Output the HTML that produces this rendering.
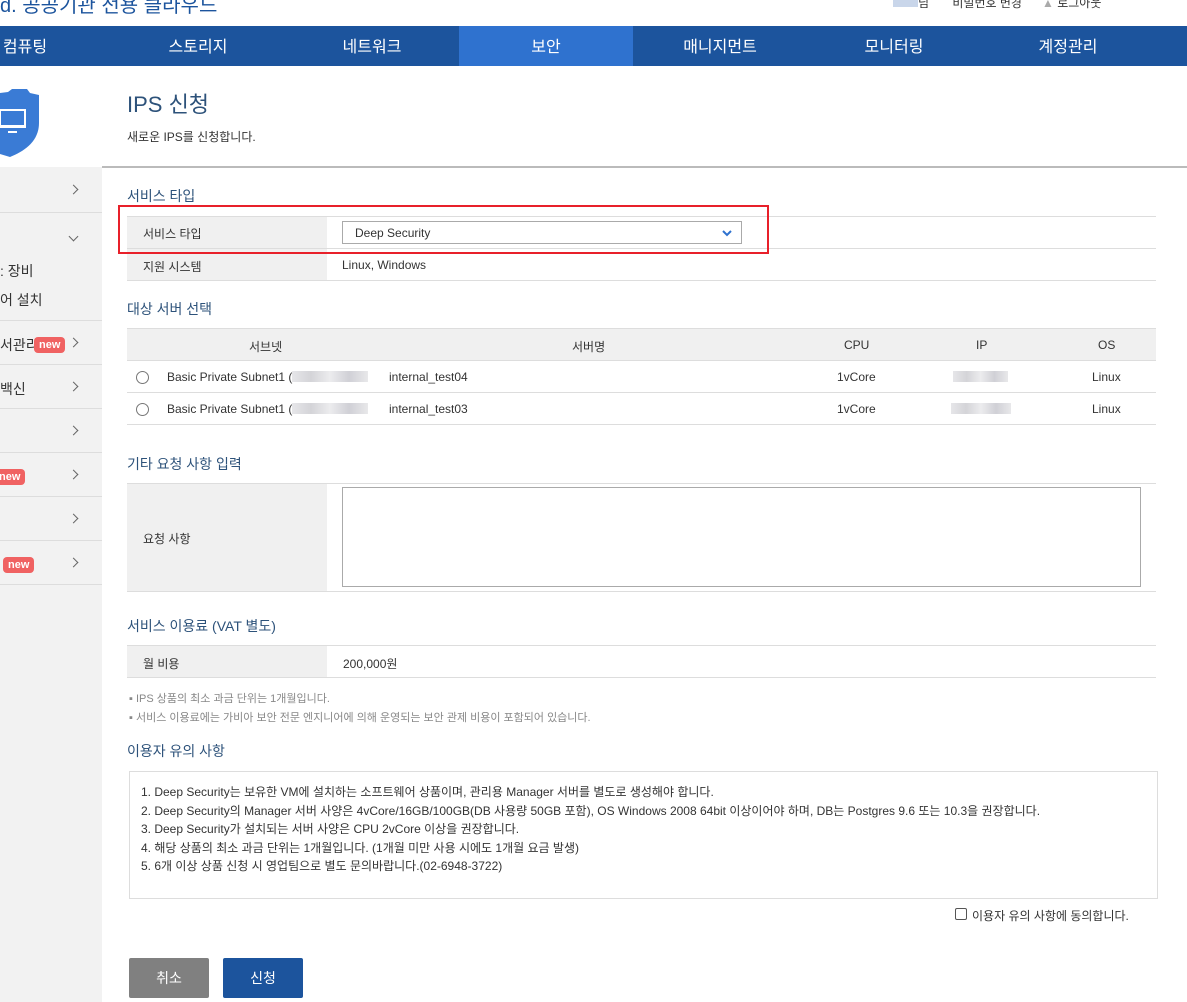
<!DOCTYPE html>
<html><head><meta charset="utf-8"><style>
*{margin:0;padding:0;box-sizing:border-box}
body{width:1187px;height:1002px;overflow:hidden;background:#fff;position:relative;font-family:"Liberation Sans","Noto Sans CJK KR",sans-serif;color:#333;font-size:12px}
.a{position:absolute;white-space:nowrap}
.nav{position:absolute;left:0;top:26px;width:1187px;height:40px;background:#1c549d}
.nav div{position:absolute;top:0;height:40px;line-height:44px;width:174px;text-align:center;color:#fff;font-size:16px}
.side{position:absolute;left:0;top:167px;width:102px;height:835px;background:#f2f2f2}
.srow{position:absolute;left:0;width:102px;border-bottom:1px solid #ddd}
.chev{position:absolute;left:70px;width:7px;height:7px;border-right:1.5px solid #666;border-top:1.5px solid #666;transform:rotate(45deg)}
.new{position:absolute;background:#f06262;color:#fff;font-weight:bold;font-size:11px;border-radius:4px;height:16px;line-height:16px;padding:0 5px}
.h{position:absolute;left:127px;font-size:14px;color:#2d527a}
.hl{position:absolute;left:127px;width:1029px;height:1px;background:#ddd}
.lab{position:absolute;left:127px;width:200px;background:#f0f0f0}
.t{position:absolute;font-size:12px;color:#333}
.radio{position:absolute;left:136px;width:13px;height:13px;border:1px solid #777;border-radius:50%;background:#fff}
.blur{position:absolute;height:11px;background:linear-gradient(90deg,#e6e6e9,#d4d4d8,#ececee,#d0d0d6,#e8e8ea)}
</style></head><body>
<div class="a" style="left:0;top:-11px;font-size:20px;color:#1c549d">d. 공공기관 전용 클라우드</div>
<div class="a" style="left:893px;top:-6px;font-size:12px;color:#333"><span style="display:inline-block;width:25px;height:8px;background:#c9d6ea"></span>님 &nbsp;&nbsp;&nbsp;&nbsp;&nbsp; 비밀번호 변경 &nbsp;&nbsp;&nbsp;&nbsp; <span style="color:#aaa">▲</span> 로그아웃</div>
<div class="nav">
<div style="left:-62px">컴퓨팅</div><div style="left:111px">스토리지</div><div style="left:285px">네트워크</div>
<div style="left:459px;background:#2f72cf">보안</div><div style="left:633px">매니지먼트</div><div style="left:807px">모니터링</div><div style="left:981px">계정관리</div>
</div>
<svg class="a" style="left:0;top:89px" width="42" height="70" viewBox="0 0 42 70"><path d="M0 4 L8 3 L12 0 L27 0 L30 4 L39 6 L39 34 C39 52 25 62 10 68 L0 65 Z" fill="#3a7bd5"/><rect x="0" y="20" width="26" height="19" fill="#fff"/><rect x="1" y="22" width="23" height="14" fill="#3a7bd5"/><rect x="8" y="42" width="9" height="2" fill="#fff"/></svg>
<div class="a" style="left:102px;top:166px;width:1085px;height:2px;background:#bbb"></div>
<div class="side"></div>
<div class="srow" style="top:167px;height:46px"><div class="chev" style="top:19px"></div></div>
<div class="srow" style="top:213px;height:108px"><div class="chev" style="top:20px;transform:rotate(135deg)"></div><div class="a" style="left:0;top:48px;font-size:14px">: 장비</div><div class="a" style="left:0;top:77px;font-size:14px">어 설치</div></div>
<div class="srow" style="top:321px;height:44px"><div class="a" style="left:0;top:14px;font-size:14px">서관리</div><div class="new" style="left:34px;top:16px">new</div><div class="chev" style="top:18px"></div></div>
<div class="srow" style="top:365px;height:44px"><div class="a" style="left:0;top:14px;font-size:14px">백신</div><div class="chev" style="top:18px"></div></div>
<div class="srow" style="top:409px;height:44px"><div class="chev" style="top:18px"></div></div>
<div class="srow" style="top:453px;height:44px"><div class="new" style="left:-6px;top:16px">new</div><div class="chev" style="top:18px"></div></div>
<div class="srow" style="top:497px;height:44px"><div class="chev" style="top:18px"></div></div>
<div class="srow" style="top:541px;height:44px"><div class="new" style="left:3px;top:16px">new</div><div class="chev" style="top:18px"></div></div>

<div class="a" style="left:127px;top:87px;font-size:22px;color:#2d527a">IPS 신청</div>
<div class="a" style="left:127px;top:128px;font-size:12px">새로운 IPS를 신청합니다.</div>

<div class="h" style="top:186px">서비스 타입</div>
<div class="hl" style="top:216px"></div>
<div class="lab" style="top:217px;height:63px"></div>
<div class="hl" style="top:248px"></div>
<div class="hl" style="top:280px"></div>
<div class="t" style="left:143px;top:225px">서비스 타입</div>
<div class="a" style="left:342px;top:221px;width:400px;height:23px;border:1px solid #aaa;background:#fff;font-size:12px;line-height:23px;padding-left:12px">Deep Security<svg style="position:absolute;right:9px;top:8px" width="10" height="7"><path d="M1 1 L5 5 L9 1" stroke="#2f72cf" stroke-width="2" fill="none"/></svg></div>
<div class="t" style="left:143px;top:258px">지원 시스템</div>
<div class="t" style="left:342px;top:258px">Linux, Windows</div>
<div class="a" style="left:118px;top:205px;width:651px;height:49px;border:2px solid #e8202a"></div>

<div class="h" style="top:299px">대상 서버 선택</div>
<div class="hl" style="top:328px"></div>
<div class="a" style="left:127px;top:329px;width:1029px;height:31px;background:#f0f0f0"></div>
<div class="hl" style="top:360px"></div><div class="hl" style="top:392px"></div><div class="hl" style="top:424px"></div>
<div class="t" style="left:249px;top:338px">서브넷</div>
<div class="t" style="left:572px;top:338px">서버명</div>
<div class="t" style="left:844px;top:338px">CPU</div>
<div class="t" style="left:976px;top:338px">IP</div>
<div class="t" style="left:1098px;top:338px">OS</div>
<div class="radio" style="top:371px"></div>
<div class="t" style="left:167px;top:370px">Basic Private Subnet1 (</div><div class="blur" style="left:292px;top:371px;width:76px"></div>
<div class="t" style="left:389px;top:370px">internal_test04</div><div class="t" style="left:837px;top:370px">1vCore</div><div class="blur" style="left:953px;top:371px;width:55px"></div><div class="t" style="left:1092px;top:370px">Linux</div>
<div class="radio" style="top:403px"></div>
<div class="t" style="left:167px;top:402px">Basic Private Subnet1 (</div><div class="blur" style="left:292px;top:403px;width:76px"></div>
<div class="t" style="left:389px;top:402px">internal_test03</div><div class="t" style="left:837px;top:402px">1vCore</div><div class="blur" style="left:951px;top:403px;width:60px"></div><div class="t" style="left:1092px;top:402px">Linux</div>

<div class="h" style="top:454px">기타 요청 사항 입력</div>
<div class="hl" style="top:483px"></div>
<div class="lab" style="top:484px;height:107px"></div>
<div class="hl" style="top:591px"></div>
<div class="t" style="left:143px;top:530px">요청 사항</div>
<div class="a" style="left:342px;top:487px;width:799px;height:100px;border:1px solid #aaa"></div>

<div class="h" style="top:616px">서비스 이용료 (VAT 별도)</div>
<div class="hl" style="top:645px"></div>
<div class="lab" style="top:646px;height:31px"></div>
<div class="hl" style="top:677px"></div>
<div class="t" style="left:143px;top:655px">월 비용</div>
<div class="t" style="left:343px;top:655px">200,000원</div>
<div class="a" style="left:129px;top:690px;font-size:11px;color:#888">▪ IPS 상품의 최소 과금 단위는 1개월입니다.</div>
<div class="a" style="left:129px;top:709px;font-size:11px;color:#888">▪ 서비스 이용료에는 가비아 보안 전문 엔지니어에 의해 운영되는 보안 관제 비용이 포함되어 있습니다.</div>

<div class="h" style="top:741px">이용자 유의 사항</div>
<div class="a" style="left:129px;top:771px;width:1029px;height:128px;border:1px solid #ddd"></div>
<div class="t" style="left:141px;top:783px;line-height:18.5px">1. Deep Security는 보유한 VM에 설치하는 소프트웨어 상품이며, 관리용 Manager 서버를 별도로 생성해야 합니다.<br>2. Deep Security의 Manager 서버 사양은 4vCore/16GB/100GB(DB 사용량 50GB 포함), OS Windows 2008 64bit 이상이어야 하며, DB는 Postgres 9.6 또는 10.3을 권장합니다.<br>3. Deep Security가 설치되는 서버 사양은 CPU 2vCore 이상을 권장합니다.<br>4. 해당 상품의 최소 과금 단위는 1개월입니다. (1개월 미만 사용 시에도 1개월 요금 발생)<br>5. 6개 이상 상품 신청 시 영업팀으로 별도 문의바랍니다.(02-6948-3722)</div>
<div class="a" style="left:955px;top:908px;width:12px;height:12px;border:1px solid #555;border-radius:2px"></div>
<div class="t" style="left:972px;top:907px">이용자 유의 사항에 동의합니다.</div>
<div class="a" style="left:129px;top:958px;width:80px;height:40px;background:#808080;color:#fff;font-size:14px;text-align:center;line-height:40px;border-radius:2px">취소</div>
<div class="a" style="left:223px;top:958px;width:80px;height:40px;background:#1c549d;color:#fff;font-size:14px;text-align:center;line-height:40px;border-radius:2px">신청</div>
</body></html>
